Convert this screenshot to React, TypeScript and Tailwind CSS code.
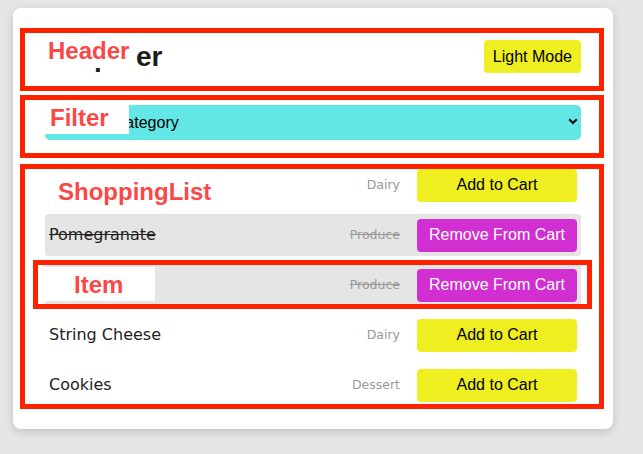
import { useState } from "react";

interface Item {
  id: number;
  name: string;
  category: string;
}

const ITEMS: Item[] = [
  { id: 1, name: "Yogurt", category: "Dairy" },
  { id: 2, name: "Pomegranate", category: "Produce" },
  { id: 3, name: "Lettuce", category: "Produce" },
  { id: 4, name: "String Cheese", category: "Dairy" },
  { id: 5, name: "Cookies", category: "Dessert" },
];

const SANS = "font-['Liberation_Sans',Arial,sans-serif]";
const BODY = "font-['DejaVu_Sans',Verdana,sans-serif]";

// red annotation frame drawn over a section
function Frame({ className }: { className: string }) {
  return <div className={`absolute border-[5px] border-[#ff2200] pointer-events-none ${className}`} />;
}

function Label({ className, children }: { className: string; children: React.ReactNode }) {
  return (
    <div className={`absolute bg-white text-[24px] leading-6 font-bold text-[#f94848] ${SANS} ${className}`}>
      {children}
    </div>
  );
}

function Row({ item, inCart, onToggle }: { item: Item; inCart: boolean; onToggle: () => void }) {
  const strike = inCart ? "line-through" : "";
  return (
    <li className={`flex items-center h-[42px] px-1 rounded-[3px] ${inCart ? "bg-[#e5e5e5]" : ""}`}>
      <span className={`flex-1 text-[16px] text-[#222] ${strike} ${BODY}`}>{item.name}</span>
      <span className={`text-[12.5px] text-[#999] ${strike} ${BODY}`}>{item.category}</span>
      <button
        onClick={onToggle}
        className={`ml-[17px] w-[160px] h-[33px] rounded text-[16px] ${SANS} ${inCart ? "bg-[#d22fd2] text-white" : "bg-[#eeee20] text-black"}`}
      >
        {inCart ? "Remove From Cart" : "Add to Cart"}
      </button>
    </li>
  );
}

export default function App() {
  const [cart, setCart] = useState<number[]>([2, 3]);
  const [category, setCategory] = useState("All");

  const toggle = (id: number) =>
    setCart(c => (c.includes(id) ? c.filter(x => x !== id) : [...c, id]));

  const shown = ITEMS.filter(i => category === "All" || i.category === category);

  return (
    <div className="min-h-screen bg-[#e6e6e6] pt-2 pl-[13px]">
      <div className="w-[600px] bg-white rounded-lg shadow-[0_3px_10px_rgba(0,0,0,0.16)] px-8 pt-8 pb-[23px]">
        {/* Header */}
        <header className="relative flex items-center justify-between h-[33px]">
          <h2 className={`-ml-1 text-[28px] font-bold text-[#1c1c1c] ${SANS}`}>Shopster</h2>
          <button className={`h-[33px] px-[9px] rounded bg-[#eeee20] text-[16px] text-black ${SANS}`}>Light Mode</button>
          <Frame className="-left-[25px] -right-[23px] -top-3 -bottom-[18px]" />
          <Label className="-top-px -left-[5px] w-[96px] h-[29px] pl-[8px]">Header</Label>
        </header>

        {/* Filter */}
        <div className="relative mt-8">
          <select
            value={category}
            onChange={e => setCategory(e.target.value)}
            className={`appearance-none w-full h-[35px] rounded-[5px] bg-[#63e6e6] pl-[11px] text-[16px] text-black outline-none ${SANS}`}
          >
            <option value="All">Filter by category</option>
            <option value="Produce">Produce</option>
            <option value="Dairy">Dairy</option>
            <option value="Dessert">Dessert</option>
          </select>
          <svg className="absolute right-[3px] top-[13px] pointer-events-none" width="10" height="7" viewBox="0 0 10 7">
            <path d="M1.2 1.2 L5 5 L8.8 1.2" fill="none" stroke="#111" strokeWidth="2.2" />
          </svg>
          <Frame className="-left-[25px] -right-[23px] -top-[10px] -bottom-[18px]" />
          <Label className="top-0 left-0 w-[84px] h-[29px] pl-[5px] pt-px">Filter</Label>
        </div>

        {/* ShoppingList */}
        <ul className="relative mt-6 flex flex-col gap-2">
          {shown.map((item, i) => (
            <div key={item.id} className="relative">
              <Row item={item} inCart={cart.includes(item.id)} onToggle={() => toggle(item.id)} />
              {i === 2 && (
                <>
                  <Frame className="-left-3 -right-[11px] -top-1 -bottom-[3px]" />
                  <Label className="top-[3px] left-0 w-[110px] h-[34px] pl-[29px] pt-[6px]">Item</Label>
                </>
              )}
            </div>
          ))}
          <Frame className="-left-[25px] -right-[23px] top-0 -bottom-[3px]" />
          <Label className="top-[6px] left-0 w-[190px] h-[34px] pl-[13px] pt-[10px]">ShoppingList</Label>
        </ul>
      </div>
    </div>
  );
}
